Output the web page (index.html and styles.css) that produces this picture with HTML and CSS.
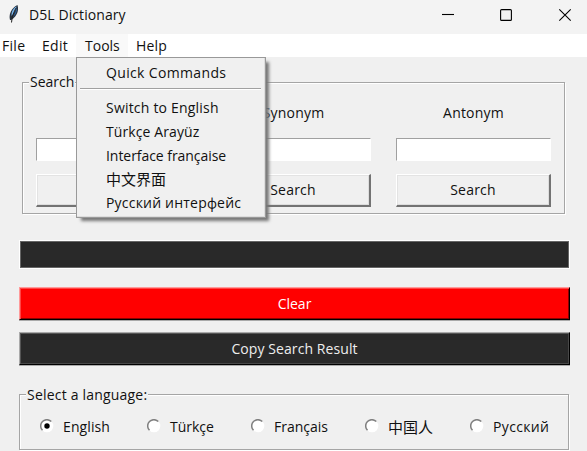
FILE: index.html
```html
<!DOCTYPE html>
<html lang="en">
<head>
<meta charset="utf-8">
<title>D5L Dictionary</title>
<link rel="stylesheet" href="styles.css">
</head>
<body>
<header class="titlebar">
  <svg class="feather" width="14" height="20" viewBox="0 0 14 20">
    <path d="M3 16C1.5 11 4 4 10.5 1C12 6 10.5 12 4 16Z" fill="#27313e"/>
    <path d="M4.6 12C4 8 6.5 4 9.5 2.3C9 6 7 9 4.6 12Z" fill="#79b5eb"/>
    <path d="M5.6 13.5C8.5 11 10.5 7 10 3C9 7 7.5 11 5.6 13.5Z" fill="#2d68aa"/>
    <path d="M9 4C7 8 5 12 4.5 18.5" fill="none" stroke="#222" stroke-width="1"/>
  </svg>
  <span class="title">D5L Dictionary</span>
  <svg class="controls" width="131" height="14" viewBox="0 0 131 14" fill="none" stroke="#000" stroke-width="1.1">
    <path d="M0 6.5H12"/>
    <rect x="58.6" y="1.6" width="10.8" height="10.8" rx="1"/>
    <path d="M117.3 1.3L128.7 12.7M128.7 1.3L117.3 12.7"/>
  </svg>
</header>
<nav class="menubar">
  <span class="item file">File</span>
  <span class="item edit">Edit</span>
  <div class="item tools active">Tools
    <ul class="menu">
      <li class="quick">Quick Commands</li>
      <li class="separator"></li>
      <li class="switch">Switch to English</li>
      <li class="turkish">Türkçe Arayüz</li>
      <li class="french">Interface française</li>
      <li class="cjk">中文界面</li>
      <li class="russian">Русский интерфейс</li>
    </ul>
  </div>
  <span class="item help">Help</span>
</nav>
<main>
  <section class="group search">
    <span class="legend">Search</span>
    <div class="field"><label></label><div class="entry"></div><div class="button"></div></div>
    <div class="field"><label>Synonym</label><div class="entry"></div><div class="button">Search</div></div>
    <div class="field"><label>Antonym</label><div class="entry"></div><div class="button">Search</div></div>
  </section>
  <div class="result"></div>
  <div class="bar clear">Clear</div>
  <div class="bar copy">Copy Search Result</div>
  <section class="group languages">
    <span class="legend select">Select a language:</span>
    <div class="choice c1"><svg class="radio" width="14" height="14" viewBox="0 0 14 14"><circle cx="7" cy="7" r="6.3" fill="#fff"/><path d="M2.5 11.3A6 6 0 0 1 11.3 2.5" fill="none" stroke="#808080" stroke-width="1.5"/><circle cx="7" cy="7" r="2.7"/></svg><span>English</span></div>
    <div class="choice c2"><svg class="radio" width="14" height="14" viewBox="0 0 14 14"><circle cx="7" cy="7" r="6.3" fill="#fff"/><path d="M2.5 11.3A6 6 0 0 1 11.3 2.5" fill="none" stroke="#808080" stroke-width="1.5"/></svg><span>Türkçe</span></div>
    <div class="choice c3"><svg class="radio" width="14" height="14" viewBox="0 0 14 14"><circle cx="7" cy="7" r="6.3" fill="#fff"/><path d="M2.5 11.3A6 6 0 0 1 11.3 2.5" fill="none" stroke="#808080" stroke-width="1.5"/></svg><span>Français</span></div>
    <div class="choice c4"><svg class="radio" width="14" height="14" viewBox="0 0 14 14"><circle cx="7" cy="7" r="6.3" fill="#fff"/><path d="M2.5 11.3A6 6 0 0 1 11.3 2.5" fill="none" stroke="#808080" stroke-width="1.5"/></svg><span class="cjk">中国人</span></div>
    <div class="choice c5"><svg class="radio" width="14" height="14" viewBox="0 0 14 14"><circle cx="7" cy="7" r="6.3" fill="#fff"/><path d="M2.5 11.3A6 6 0 0 1 11.3 2.5" fill="none" stroke="#808080" stroke-width="1.5"/></svg><span>Русский</span></div>
  </section>
</main>
</body>
</html>
```
FILE: styles.css
```css
* { box-sizing: border-box; }
body {
  margin: 0;
  width: 587px;
  height: 451px;
  overflow: hidden;
  background: #f0f0f0;
  color: #111;
  font: 14px/20px "Open Sans", "Noto Sans CJK SC", sans-serif;
  white-space: nowrap;
}
.titlebar {
  display: flex;
  align-items: center;
  height: 34px;
  padding: 0 14px 4px 7px;
  background: #f3f3f3;
}
.feather { margin-top: -2px; }
.title { margin-left: 8px; letter-spacing: 0.08px; }
.controls { margin-left: auto; }
.menubar { display: flex; height: 23px; background: #fff; line-height: 23px; }
.item { position: relative; }
.file { width: 42px; padding-left: 2px; letter-spacing: 0.3px; }
.edit { width: 34px; letter-spacing: 0.3px; }
.tools { width: 52px; padding-left: 9px; }
.help { padding-left: 8px; letter-spacing: 0.2px; }
.active { background: #f9f9f9; }
.menu {
  position: absolute;
  z-index: 2;
  top: 23px;
  left: 0;
  width: 190px;
  height: 161px;
  margin: 0;
  padding: 3px 3px 0;
  list-style: none;
  letter-spacing: 0;
  background: #f0f0f0;
  border: 1px solid #999;
  box-shadow: inset -1px -1px #ddd, 4px 4px 3px -1px #777;
}
.menu li { height: 24px; padding-left: 26px; line-height: 24px; }
.menu .separator {
  width: 181px;
  height: 2px;
  margin: 3px 0 6px;
  background: #a0a0a0;
  border-bottom: 1px solid #fff;
}
.menu .quick { letter-spacing: 0.35px; }
.menu .switch { letter-spacing: 0.2px; }
.menu .turkish { letter-spacing: 0.1px; }
.menu .french { letter-spacing: -0.05px; }
.menu .cjk { line-height: 22px; }
.menu .russian { line-height: 22px; letter-spacing: 0.2px; }
.cjk { font-size: 15px; }
main { padding: 25px 18px 0 19px; }
.group {
  position: relative;
  border: 1px solid #a5a5a5;
  box-shadow: 1px 1px #fff, inset 1px 1px #fff;
}
.legend {
  position: absolute;
  top: -10px;
  left: 6px;
  padding: 0 1px;
  background: #f0f0f0;
}
.select { letter-spacing: 0.2px; }
.search {
  display: grid;
  grid-template-columns: repeat(3, 155px);
  column-gap: 25px;
  width: 543px;
  height: 132px;
  margin-left: 3px;
  padding: 20px 0 0 13px;
}
.search .legend { top: -11px; }
.field { text-align: center; letter-spacing: 0.2px; }
.field label { display: block; height: 20px; }
.entry {
  height: 23px;
  margin-top: 15px;
  background: #fff;
  border: solid #fff;
  border-width: 1px;
  border-top-color: #a0a0a0;
  border-left-color: #a0a0a0;
}
.button {
  height: 33px;
  margin-top: 13px;
  border: 2px solid;
  border-color: #fff #737373 #737373 #fff;
  border-width: 1px 2px 2px 1px;
  box-shadow: inset -1px -1px #ddd, inset 1px 1px #e3e3e3;
  line-height: 30px;
}
.result {
  width: 551px;
  height: 29px;
  margin-top: 26px;
  border: 1px solid #fff;
  background: #292929;
  box-shadow: inset 0 0 0 1px #666;
}
.bar {
  width: 551px;
  height: 33px;
  color: #fff;
  text-align: center;
  line-height: 32px;
}
.clear {
  margin-top: 18px;
  background: #f00;
  border: 1px solid;
  border-color: #ff9a9a #000 #000 #ff9a9a;
  box-shadow: inset 1px 1px #ff4545, inset -1px -1px #8d0000, 0 1px #aaa;
}
.copy {
  margin-top: 12px;
  color: #eee;
  background: #292929;
  border: 1px solid;
  border-color: #aaa #000 #000 #aaa;
  box-shadow: inset 1px 1px #555, inset -1px -1px #484848, 0 1px #aaa;
  letter-spacing: 0.08px;
}
.languages {
  display: flex;
  width: 550px;
  height: 56px;
  margin-top: 29px;
  padding: 21px 0 0 20px;
}
.choice { display: flex; height: 22px; line-height: 22px; }
.radio { flex: none; margin: 3px 9px 0 0; }
.c1 { width: 107px; letter-spacing: 0.1px; }
.c2 { width: 104px; }
.c3 { width: 114px; }
.c4 { width: 105px; }
.c5 { letter-spacing: 0.35px; }
```
